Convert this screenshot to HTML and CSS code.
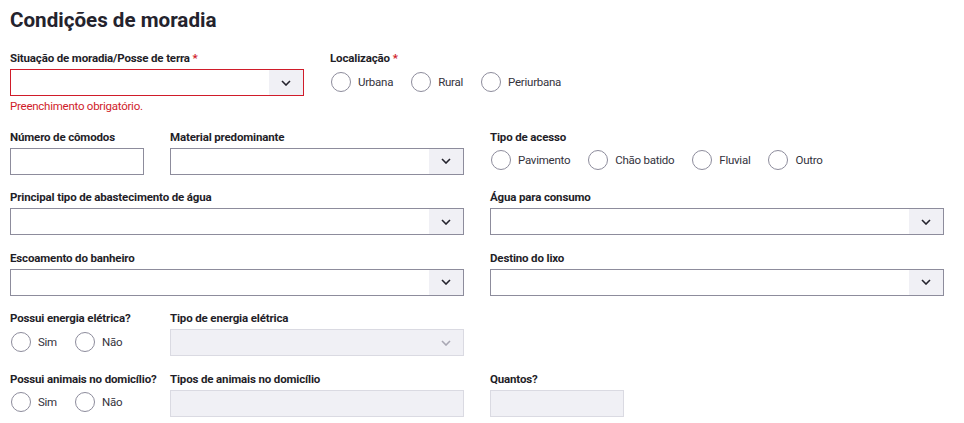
FILE: index.html
```html
<!DOCTYPE html>
<html lang="pt-BR">
<head>
<meta charset="utf-8">
<title>Condições de moradia</title>
<link rel="stylesheet" href="styles.css">
</head>
<body>
<main class="page">
  <h1 class="title">Condições de moradia</h1>
  <div class="grid">
    <div class="field span2">
      <div class="label">Situação de moradia/Posse de terra <span class="req">*</span></div>
      <div class="select is-error"><span class="arrow"><svg width="10" height="6" viewBox="0 0 10 6"><path d="M1 1l4 4 4-4" fill="none" stroke="currentColor" stroke-width="1.6"/></svg></span></div>
      <div class="error-msg">Preenchimento obrigatório.</div>
    </div>
    <div class="field span4">
      <div class="label">Localização <span class="req">*</span></div>
      <div class="radios">
        <span class="radio"><span class="circle"></span>Urbana</span>
        <span class="radio"><span class="circle"></span>Rural</span>
        <span class="radio"><span class="circle"></span>Periurbana</span>
      </div>
    </div>

    <div class="field">
      <div class="label">Número de cômodos</div>
      <div class="input"></div>
    </div>
    <div class="field span2">
      <div class="label">Material predominante</div>
      <div class="select"><span class="arrow"><svg width="10" height="6" viewBox="0 0 10 6"><path d="M1 1l4 4 4-4" fill="none" stroke="currentColor" stroke-width="1.6"/></svg></span></div>
    </div>
    <div class="field span3">
      <div class="label">Tipo de acesso</div>
      <div class="radios">
        <span class="radio"><span class="circle"></span>Pavimento</span>
        <span class="radio"><span class="circle"></span>Chão batido</span>
        <span class="radio"><span class="circle"></span>Fluvial</span>
        <span class="radio"><span class="circle"></span>Outro</span>
      </div>
    </div>

    <div class="field span3">
      <div class="label">Principal tipo de abastecimento de água</div>
      <div class="select"><span class="arrow"><svg width="10" height="6" viewBox="0 0 10 6"><path d="M1 1l4 4 4-4" fill="none" stroke="currentColor" stroke-width="1.6"/></svg></span></div>
    </div>
    <div class="field span3">
      <div class="label">Água para consumo</div>
      <div class="select"><span class="arrow"><svg width="10" height="6" viewBox="0 0 10 6"><path d="M1 1l4 4 4-4" fill="none" stroke="currentColor" stroke-width="1.6"/></svg></span></div>
    </div>

    <div class="field span3">
      <div class="label">Escoamento do banheiro</div>
      <div class="select"><span class="arrow"><svg width="10" height="6" viewBox="0 0 10 6"><path d="M1 1l4 4 4-4" fill="none" stroke="currentColor" stroke-width="1.6"/></svg></span></div>
    </div>
    <div class="field span3">
      <div class="label">Destino do lixo</div>
      <div class="select"><span class="arrow"><svg width="10" height="6" viewBox="0 0 10 6"><path d="M1 1l4 4 4-4" fill="none" stroke="currentColor" stroke-width="1.6"/></svg></span></div>
    </div>

    <div class="field">
      <div class="label">Possui energia elétrica?</div>
      <div class="radios">
        <span class="radio"><span class="circle"></span>Sim</span>
        <span class="radio"><span class="circle"></span>Não</span>
      </div>
    </div>
    <div class="field span2">
      <div class="label">Tipo de energia elétrica</div>
      <div class="select is-disabled"><span class="arrow"><svg width="10" height="6" viewBox="0 0 10 6"><path d="M1 1l4 4 4-4" fill="none" stroke="currentColor" stroke-width="1.6"/></svg></span></div>
    </div>
    <div class="field span3"></div>

    <div class="field">
      <div class="label">Possui animais no domicílio?</div>
      <div class="radios">
        <span class="radio"><span class="circle"></span>Sim</span>
        <span class="radio"><span class="circle"></span>Não</span>
      </div>
    </div>
    <div class="field span2">
      <div class="label">Tipos de animais no domicílio</div>
      <div class="input is-disabled"></div>
    </div>
    <div class="field">
      <div class="label">Quantos?</div>
      <div class="input is-disabled"></div>
    </div>
  </div>
</main>
</body>
</html>
```

FILE: styles.css
```css
* { box-sizing: border-box; }
body {
  margin: 0;
  background: #ffffff;
  font-family: Roboto, "Liberation Sans", sans-serif;
  color: #24232d;
}
.page {
  padding: 6px 10px 0 10px;
}
.title {
  margin: 0 0 16px 0;
  font-size: 20.6px;
  line-height: 28px;
  font-weight: 700;
  color: #24232d;
}
.grid {
  display: grid;
  grid-template-columns: repeat(6, 134px);
  column-gap: 26px;
  row-gap: 14.6px;
}
.field {
  display: flex;
  flex-direction: column;
  min-width: 0;
}
.span2 { grid-column: span 2; }
.span3 { grid-column: span 3; }
.span4 { grid-column: span 4; }
.label {
  font-size: 11.5px;
  letter-spacing: -0.15px;
  line-height: 16px;
  font-weight: 700;
  margin-bottom: 3px;
  white-space: nowrap;
  color: #1f1e28;
}
.req { color: #d01c2a; }
.input,
.select {
  height: 27px;
  border: 1px solid #8d8c9c;
  background: #ffffff;
}
.select {
  display: flex;
  justify-content: flex-end;
}
.arrow {
  width: 34px;
  height: 100%;
  background: #f0f0f5;
  display: flex;
  align-items: center;
  justify-content: center;
  color: #24232d;
}
.select.is-error { border-color: #d01c2a; }
.is-disabled {
  background: #f0f0f5;
  border-color: #dadae2;
}
.is-disabled .arrow { color: #a8a7b3; }
.error-msg {
  margin-top: 2px;
  font-size: 11.5px;
  letter-spacing: -0.25px;
  line-height: 16px;
  color: #d01c2a;
}
.radios {
  height: 27px;
  display: flex;
  align-items: center;
  margin-top: -1px;
}
.radio {
  display: flex;
  align-items: center;
  font-size: 11.5px;
  letter-spacing: -0.25px;
  line-height: 20px;
  color: #33323c;
  margin-right: 17px;
}
.circle {
  flex: none;
  width: 20px;
  height: 20px;
  border: 1px solid #8d8c9c;
  border-radius: 50%;
  margin: 0 7px 0 1px;
  background: #ffffff;
}
```
